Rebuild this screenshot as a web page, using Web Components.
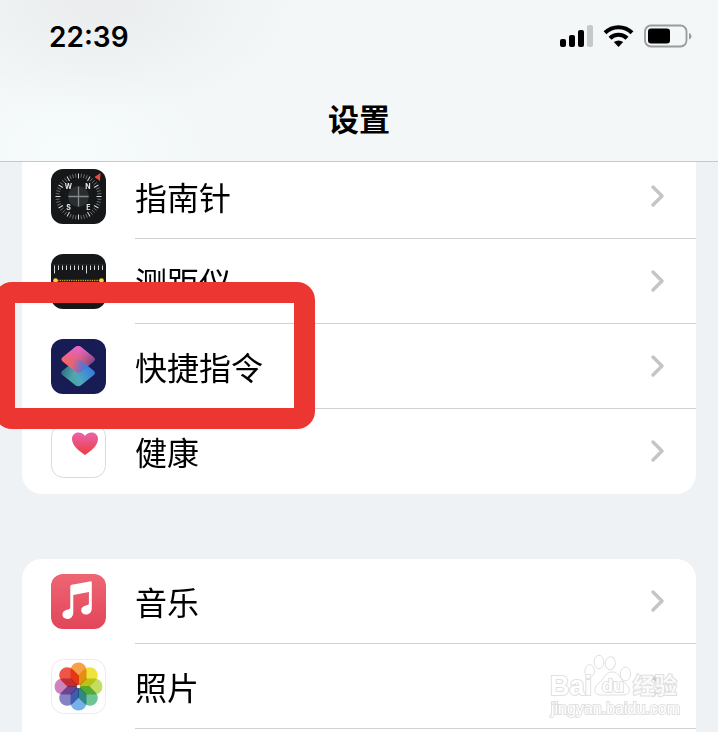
<!DOCTYPE html>
<html lang="zh-CN">
<head>
<meta charset="utf-8">
<meta name="viewport" content="width=device-width, initial-scale=1">
<title>设置</title>
<style>
  html, body { margin: 0; }
  body {
    background: #eef2f5;
    color: #000;
    font-family: Inter, "Noto Sans CJK SC", sans-serif;
  }
</style>
</head>
<body>
<settings-screen>
  <status-bar slot="header" time="22:39"></status-bar>
  <nav-title slot="header">设置</nav-title>

  <settings-group class="first">
    <settings-row icon="compass">指南针</settings-row>
    <settings-row icon="measure">测距仪</settings-row>
    <settings-row icon="shortcuts" marked>快捷指令</settings-row>
    <settings-row icon="health">健康</settings-row>
  </settings-group>

  <settings-group class="last">
    <settings-row icon="music">音乐</settings-row>
    <settings-row icon="photos">照片</settings-row>
  </settings-group>

  <water-mark slot="overlay"></water-mark>
</settings-screen>

<script>
const define = (name, html) => customElements.define(name, class extends HTMLElement {
  constructor() {
    super();
    this.attachShadow({ mode: 'open' }).innerHTML = html;
  }
});

// Ticks around the compass dial, every fourth one longer and brighter
function dialTicks() {
  let out = '';
  for (let i = 0; i < 48; i++) {
    const main = i % 4 === 0;
    out += `<path d="M27.5 4.5v${main ? 5 : 4}" stroke="${main ? '#d8dadb' : '#777b7d'}" stroke-width="${main ? 1 : 0.8}" transform="rotate(${i * 7.5} 27.5 27.5)"/>`;
  }
  return out;
}

function rulerTicks() {
  let out = '';
  for (let i = 0; i < 13; i++) {
    const x = 3.5 + i * 4;
    out += `<path d="M${x} 11.5v${i % 8 === 0 ? 8 : 4.5}" stroke="#d5d7d8" stroke-width="1"/>`;
  }
  return out;
}

function petals() {
  const colors = ['#f6a04a', '#efe23c', '#c3dc62', '#6cc592', '#74b2e8', '#8583c4', '#cf83bd', '#ee5548'];
  return colors.map((c, i) =>
    `<path d="M19.5 11.5a8 8 0 0 1 16 0V20l-8 8-8-8z" fill="${c}" style="mix-blend-mode:multiply" transform="rotate(${i * 45} 27.5 27.5)"/>`
  ).join('');
}

const TILE = 'M24 8.3q3.2-2.6 6.400 0L42.5 18q3 2.4 0 4.8L30.4 32.5q-3.2 2.6-6.400 0L11.9 22.8q-3-2.4 0-4.8z';

const ICONS = {
  compass: `
    <rect width="55" height="55" rx="12" fill="#151719"/>
    ${dialTicks()}
    <circle cx="27.5" cy="27.5" r="10.5" fill="#2b2e30"/>
    <path d="M27.5 17.5v20M17.5 27.5h20" stroke="#85898b" stroke-width="1.3"/>
    <path d="M43.5 8l6-4-.5 8z" fill="#f0493b"/>
    <g fill="#e9eaea" font-family="Inter, sans-serif" font-size="7" font-weight="700" text-anchor="middle">
      <text x="17.5" y="20">W</text><text x="37" y="20">N</text>
      <text x="17.5" y="41">S</text><text x="37.5" y="41">E</text>
    </g>`,
  measure: `
    <rect width="55" height="55" rx="12" fill="#151719"/>
    <path d="M0 10.5h55" stroke="#222527"/>
    ${rulerTicks()}
    <path d="M4 26.5h47" stroke="#d6a834" stroke-width="1.3" stroke-dasharray="1.3 1"/>
    <circle cx="4.5" cy="26.5" r="2.3" fill="#fbd23b"/><circle cx="50.5" cy="26.5" r="2.3" fill="#fbd23b"/>`,
  shortcuts: `
    <defs>
      <linearGradient id="top" x1="0" y1=".5" x2="1" y2=".5">
        <stop offset="0" stop-color="#f5695c"/><stop offset=".5" stop-color="#e0607f"/><stop offset="1" stop-color="#6f4488"/>
      </linearGradient>
      <linearGradient id="glow" x1="0" y1="0" x2="0" y2="1">
        <stop offset="0" stop-color="#e664d6"/><stop offset=".6" stop-color="#e664b0" stop-opacity="0"/>
      </linearGradient>
      <linearGradient id="bottom" x1="0" y1=".8" x2="1" y2=".3">
        <stop offset="0" stop-color="#459e8c"/><stop offset=".45" stop-color="#4fa8ba"/><stop offset="1" stop-color="#3173e9"/>
      </linearGradient>
      <linearGradient id="shade" x1="0" y1="0" x2="1" y2=".4">
        <stop offset="0" stop-color="#255a78"/><stop offset=".5" stop-color="#255a78" stop-opacity="0"/>
      </linearGradient>
      <linearGradient id="over" x1=".35" y1="0" x2=".8" y2=".1">
        <stop offset="0" stop-color="#3b7cec" stop-opacity="0"/><stop offset="1" stop-color="#3b7cec"/>
      </linearGradient>
      <clipPath id="tile"><path d="${TILE}"/></clipPath>
    </defs>
    <rect width="55" height="55" rx="12" fill="#181c54"/>
    <g transform="translate(0 13.5)"><path d="${TILE}" fill="url(#bottom)"/><path d="${TILE}" fill="url(#shade)"/></g>
    <path d="${TILE}" fill="url(#top)"/>
    <path d="${TILE}" fill="url(#glow)"/>
    <g clip-path="url(#tile)"><path d="${TILE}" fill="url(#over)" transform="translate(0 13.5)"/></g>`,
  health: `
    <defs><linearGradient id="heart" x1="0" y1="0" x2="0" y2="1">
      <stop offset="0" stop-color="#e964ae"/><stop offset="1" stop-color="#ee3d3d"/>
    </linearGradient></defs>
    <rect x=".5" y=".5" width="54" height="53" rx="12" fill="#fff" stroke="#d9dadb"/>
    <path d="M34 31C27.5 26.5 21 21.5 21 15c0-4 2.8-6.5 6.3-6.5 3 0 5.400 1.3 6.7 3.400 1.3-2.1 3.7-3.400 6.7-3.400 3.5 0 6.3 2.5 6.3 6.5 0 6.5-6.5 11.5-13 16z" fill="url(#heart)"/>`,
  music: `
    <defs><linearGradient id="red" x1="0" y1="0" x2="0" y2="1">
      <stop offset="0" stop-color="#ed6674"/><stop offset="1" stop-color="#e24559"/>
    </linearGradient></defs>
    <rect width="55" height="55" rx="12" fill="url(#red)"/>
    <path d="M19.3 12.5q0-1.5 1.5-1.8L39 7.4q1.8-.3 1.8 1.4V34c0 4-2.3 6.5-5.7 6.5-3 0-4.9-1.7-4.9-4.2 0-2.6 1.8-4.2 4.6-4.8l1.8-.4q1.3-.3 1.3-1.7V18l-15.6 2.9V38c0 4.3-2.3 7-5.9 7-3 0-5-1.8-5-4.4 0-2.5 1.7-4.3 4.7-4.9l1.8-.4q1.4-.3 1.4-1.8z" fill="#fff"/>`,
  photos: `
    <rect x=".5" y=".5" width="54" height="54" rx="12" fill="#fff" stroke="#ececed"/>
    <g style="isolation:isolate">${petals()}</g>
    <circle cx="27.5" cy="27.5" r="1.7" fill="#fff"/>`
};

define('settings-screen', `
  <style>
    :host { display: flex; flex-direction: column; position: relative; min-height: 100vh; overflow: hidden; }
    header {
      position: relative;
      z-index: 2;
      display: flex;
      flex-direction: column;
      box-sizing: border-box;
      height: 162px;
      border-bottom: 1px solid #c5c9cc;
      background:
        radial-gradient(ellipse 190px 110px at 100px 0, #eaeced, transparent),
        radial-gradient(ellipse 150px 90px at 70px 150px, #f6fbfb, transparent),
        #f3f7f8;
    }
    main { flex: 1; display: flex; flex-direction: column; gap: 65px; margin-top: -8px; padding: 0 22px; }
  </style>
  <header><slot name="header"></slot></header>
  <main><slot></slot></main>
  <slot name="overlay"></slot>
`);

customElements.define('status-bar', class extends HTMLElement {
  connectedCallback() {
    this.attachShadow({ mode: 'open' }).innerHTML = `
      <style>
        :host { display: flex; align-items: center; justify-content: space-between; height: 72px; padding: 0 26px 0 49px; }
        time { padding-top: 2px; font: 600 28px/32px Inter, sans-serif; }
        .signals { display: flex; align-items: center; gap: 10px; }
        svg { display: block; }
      </style>
      <time>${this.getAttribute('time')}</time>
      <div class="signals">
        <svg width="33" height="22" viewBox="0 0 33 22" role="img" aria-label="信号">
          <rect x="0" y="14" width="6" height="8" rx="2"/><rect x="9" y="10" width="6" height="12" rx="2"/>
          <rect x="18" y="5" width="6" height="17" rx="2"/><rect x="27" width="6" height="22" rx="2" fill="#c6c9ca"/>
        </svg>
        <svg width="31" height="24" viewBox="0 0 31 24" role="img" aria-label="无线局域网">
          <g fill="none" stroke="#000" stroke-width="4.2">
            <path d="M2 8.7a19.5 19.5 0 0 1 27 0"/><path d="M7 14.3a12 12 0 0 1 17 0"/>
          </g>
          <path d="M10.8 18.1q4.7-3.4 9.4 0L15.5 23z"/>
        </svg>
        <svg width="48" height="24" viewBox="0 0 48 24" role="img" aria-label="电池">
          <rect x="1" y="1.5" width="41.5" height="21" rx="6" fill="none" stroke="#999c9d" stroke-width="1.8"/>
          <rect x="4" y="4.5" width="22" height="15" rx="3"/>
          <path d="M45 9q2.5 1 2.5 3.3T45 15.5z" fill="#999c9d"/>
        </svg>
      </div>`;
  }
});

define('nav-title', `
  <style>
    :host { display: flex; flex: 1; align-items: center; justify-content: center; }
    h1 { margin: 0; padding-top: 2px; font: 700 31px/48px "Noto Sans CJK SC", sans-serif; }
  </style>
  <h1><slot></slot></h1>
`);

define('settings-group', `
  <style>
    :host { display: block; background: #fff; border-radius: 20px; }
    :host(.first) { border-radius: 0 0 20px 20px; }
    :host(.last) { flex: 1; border-radius: 20px 20px 0 0; }
    nav { display: flex; flex-direction: column; }
    :host(.first) ::slotted(:last-child) { --line: transparent; }
  </style>
  <nav><slot></slot></nav>
`);

customElements.define('settings-row', class extends HTMLElement {
  connectedCallback() {
    const mark = this.hasAttribute('marked') ? '<div class="mark"></div>' : '';
    this.attachShadow({ mode: 'open' }).innerHTML = `
      <style>
        :host { display: block; position: relative; }
        :host([marked]) { z-index: 1; }
        a { display: flex; align-items: stretch; height: 85px; padding-left: 29px; gap: 29px; color: inherit; text-decoration: none; }
        .icon { align-self: center; flex: none; }
        .body {
          flex: 1;
          display: flex;
          align-items: center;
          justify-content: space-between;
          padding-right: 31px;
          border-bottom: 1px solid var(--line, #cfd1d3);
          font: 400 32px/48px "Noto Sans CJK SC", sans-serif;
        }
        .chevron { fill: none; stroke: #c3c5c8; stroke-width: 3.5; stroke-linecap: round; stroke-linejoin: round; }
        /* frame around the row, over its neighbours */
        .mark {
          position: absolute;
          top: -42px;
          left: -28px;
          box-sizing: border-box;
          width: 321px;
          height: 147px;
          border: 21px solid #eb3631;
          border-radius: 18px;
          pointer-events: none;
        }
      </style>
      <a href="#${this.getAttribute('icon')}">
        <svg class="icon" width="55" height="55" viewBox="0 0 55 55" aria-hidden="true">${ICONS[this.getAttribute('icon')]}</svg>
        <span class="body">
          <slot></slot>
          <svg class="chevron" width="15" height="24" viewBox="0 0 15 24" aria-hidden="true"><path d="M3 3l9 9-9 9"/></svg>
        </span>
      </a>
      ${mark}`;
  }
});

define('water-mark', `
  <style>
    :host { position: absolute; right: 38px; bottom: 13px; z-index: 3; pointer-events: none; }
    svg { display: block; }
    g { fill: #fff; fill-opacity: .7; stroke: #dfe0e1; }
    text { paint-order: stroke; stroke-width: 2px; fill-opacity: 1; }
    .latin { font: 700 27px "Liberation Sans", sans-serif; }
    .du { font: 700 18px "Liberation Sans", sans-serif; }
    .han { font: 700 22px "Noto Sans CJK SC", sans-serif; fill-opacity: .8; }
    .url { font: 400 16px "Liberation Sans", sans-serif; }
  </style>
  <svg width="132" height="65" viewBox="0 0 132 65">
    <g>
      <ellipse cx="41.7" cy="17" rx="4.8" ry="6.3"/>
      <ellipse cx="51" cy="8" rx="4.8" ry="6.8"/>
      <ellipse cx="62.3" cy="9.3" rx="5" ry="6.5" transform="rotate(8 62.3 9.3)"/>
      <ellipse cx="77.5" cy="20" rx="5.2" ry="6.8"/>
      <path d="M64 18c7 0 8 7 13 11 6 4 6 12-1 12H53c-8 0-8-8-2-12 5-4 6-11 13-11z"/>
      <text class="latin" x="2" y="41">Bai</text>
      <text class="du" x="54" y="38">du</text>
      <text class="han" x="85" y="39">经验</text>
      <text class="url" x="3" y="60">jingyan.baidu.com</text>
    </g>
  </svg>
`);
</script>
</body>
</html>
